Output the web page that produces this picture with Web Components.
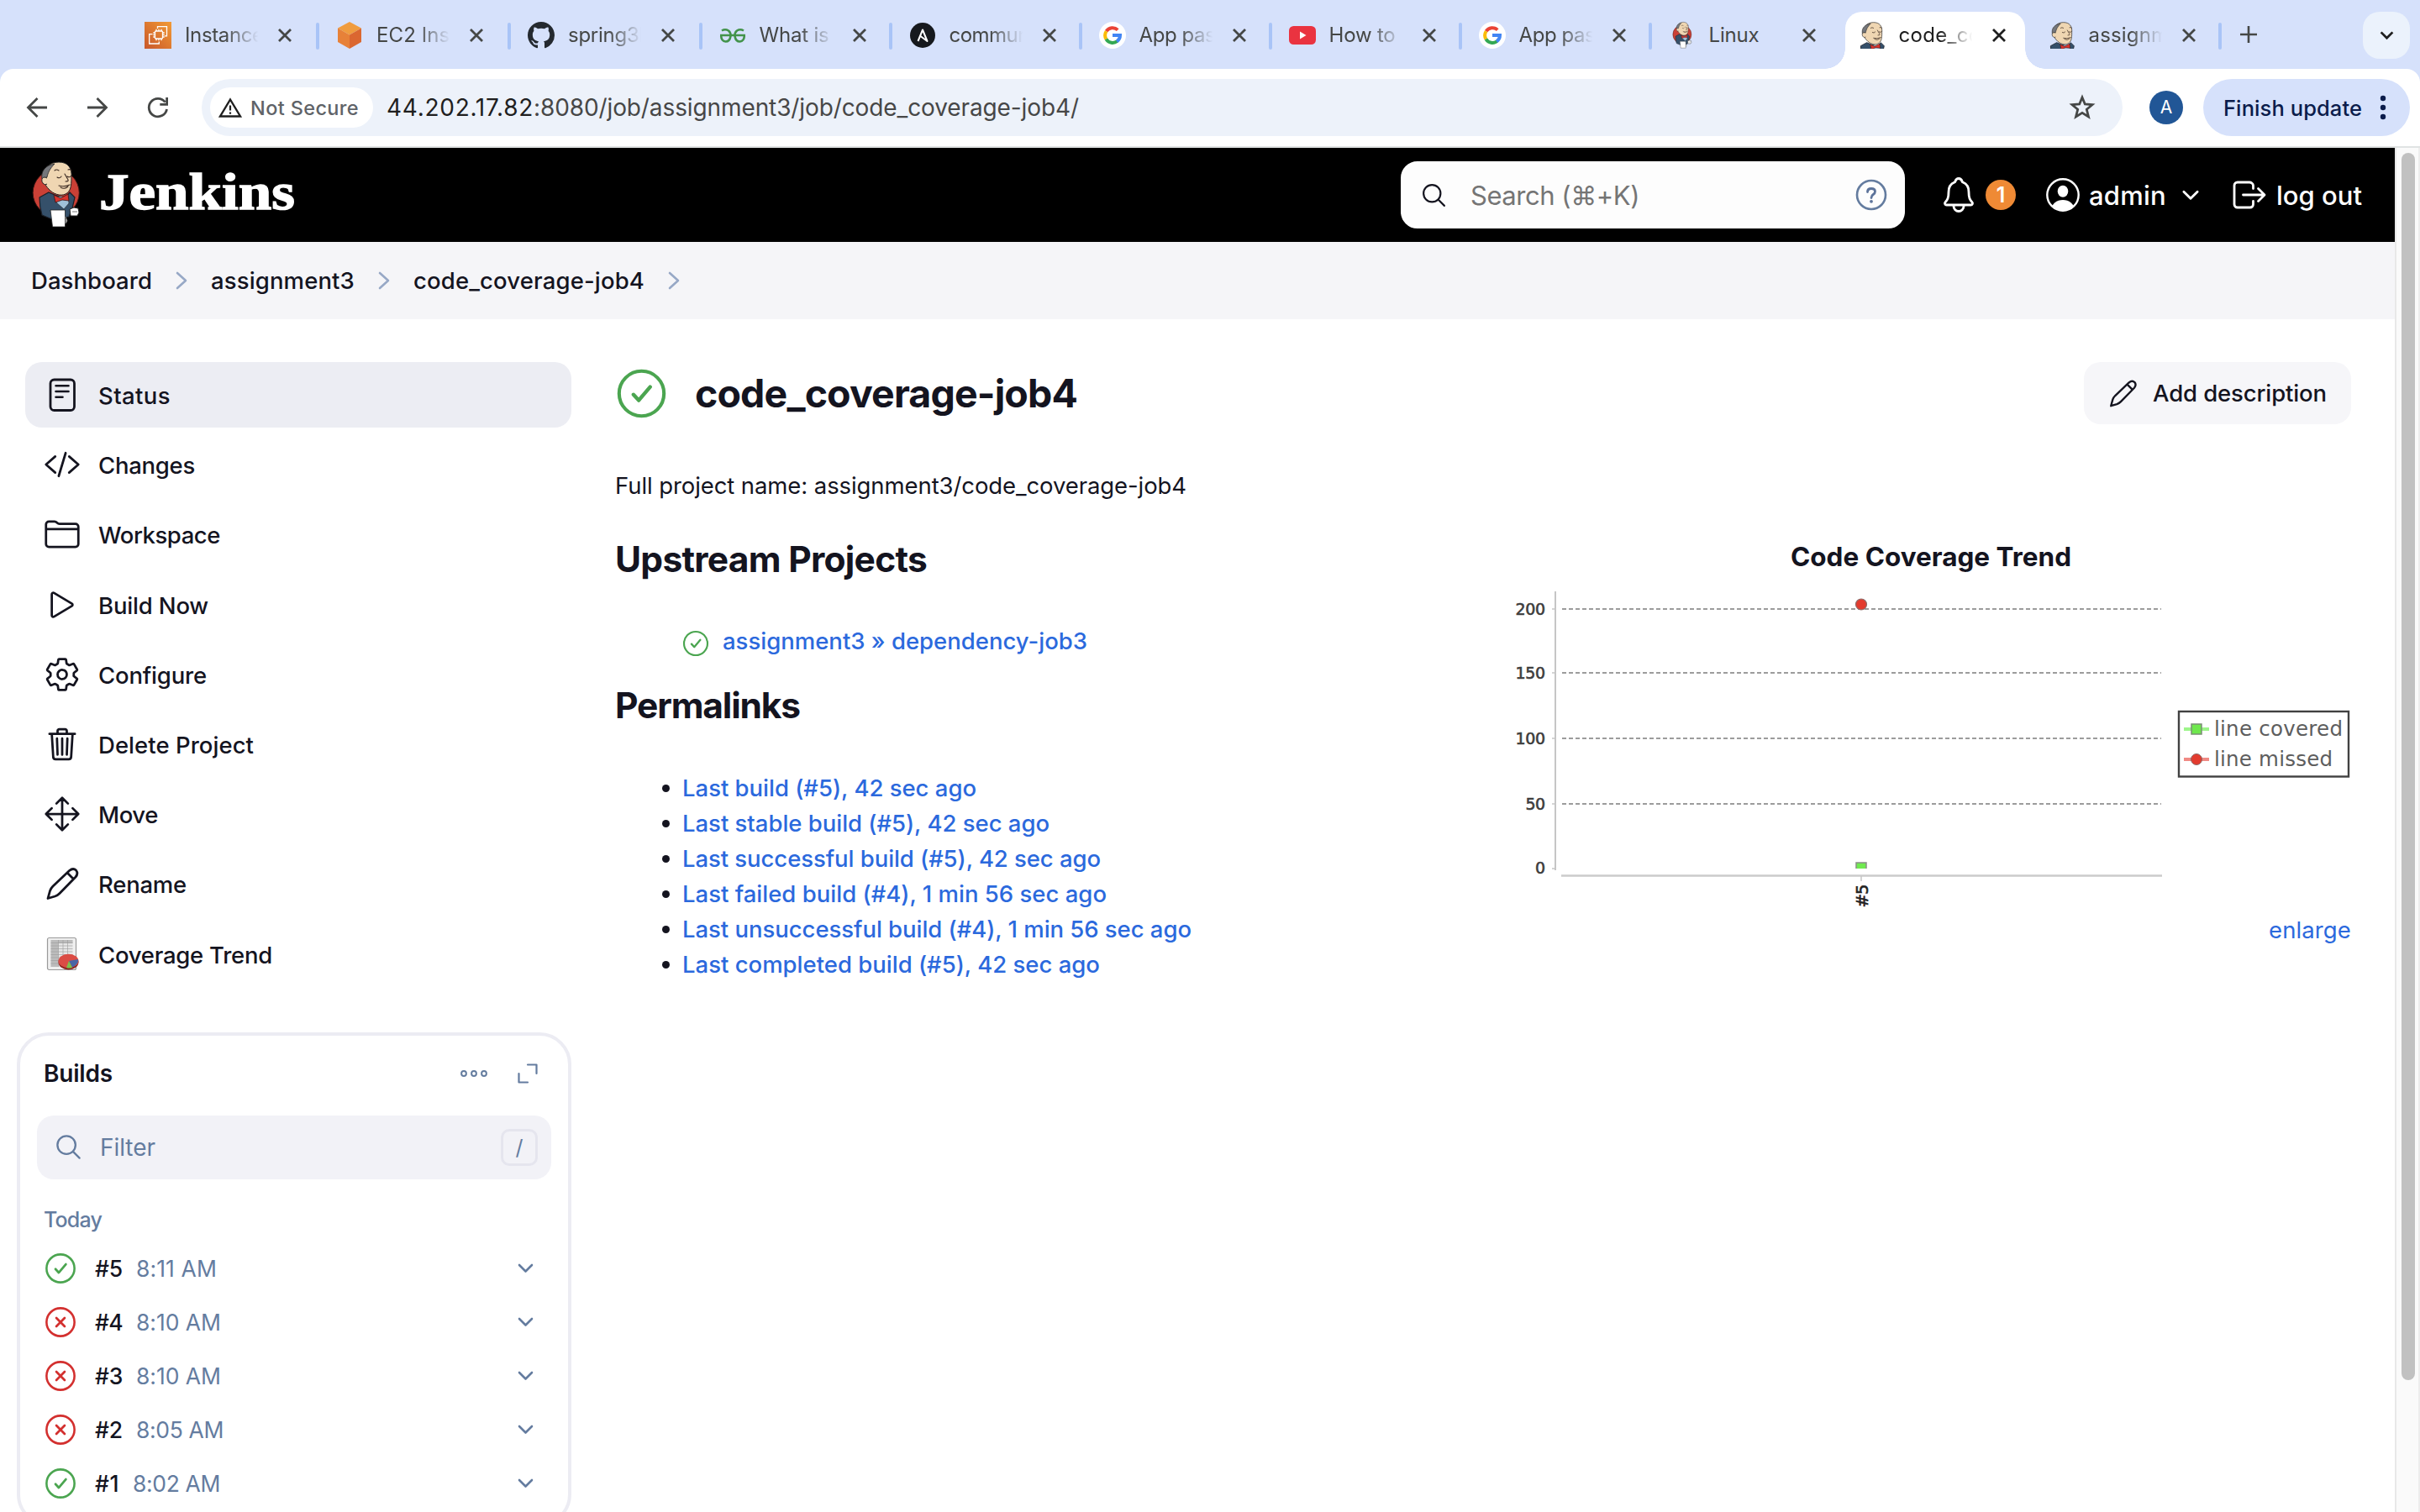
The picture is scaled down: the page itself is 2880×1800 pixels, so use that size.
<!DOCTYPE html>
<html lang="en">
<head>
<meta charset="utf-8">
<title>code_coverage-job4 [Jenkins]</title>
<style>
html,body{margin:0;padding:0}
body{width:2880px;height:1800px;overflow:hidden;background:#fff;font-family:Inter,"Liberation Sans",sans-serif;color:#14141f}
</style>
</head>
<body>
<app-window></app-window>
<script>
const S='fill="none" stroke="currentColor" stroke-linecap="round" stroke-linejoin="round"';
const HEAD=`<path d="M13 18C13 8 20 1 31 1C42 1 47 8 46 19C46 30 45 36 39 39C33 42 24 39 19 33C15 29 13 25 13 18Z" fill="#efd6b2" stroke="#222" stroke-width="1"/>
<path d="M19 5C12 9 10 14 11 21L17 19C18 14 20 9 26 3Z" fill="#75777b" stroke="#222" stroke-width=".8"/>
<path d="M17 20C12 17 9 22 12 26C13 28 16 28 17 27" fill="#efd6b2" stroke="#222" stroke-width="1"/>
<path d="M26 11Q28 9 31 11M42 10Q44 9 46 11M29 19Q32 21 34 18M41 18Q44 20 46 17M38 15L42 22Q43 24 39 24M31 29Q37 31 44 28M33 31Q38 34 42 30" fill="none" stroke="#3b2a22" stroke-width="1.1" stroke-linecap="round"/>`;
const BODY=`<path d="M8 43L19 37L26 40L38 44L44 37L50 43L47 56L43 66L23 69L11 64Q8 54 8 43Z" fill="#35506a" stroke="#1b2029" stroke-width="1.2"/>
<path d="M27 42L42 42L43 50L37 57L28 49Z" fill="#9fc0d8" stroke="#222" stroke-width=".6"/>
<path d="M25 40L33 44L42 39L43 47L35 46L27 49Z" fill="#d8352f" stroke="#391414" stroke-width=".8"/>`;
const G=`<circle cx="16" cy="16" r="16" fill="#fff"/><path d="M22.2 9.6A9 9 0 0 0 8.6 11.2" fill="none" stroke="#ea4335" stroke-width="4"/><path d="M8.6 11.2A9 9 0 0 0 8.4 20.5" fill="none" stroke="#fbbc05" stroke-width="4"/><path d="M8.4 20.5A9 9 0 0 0 21.6 23" fill="none" stroke="#34a853" stroke-width="4"/><path d="M21.2 23.3A9 9 0 0 0 25 16H16" fill="none" stroke="#4285f4" stroke-width="4"/>`;
const ICONS={
 ec2:['0 0 32 32',`<defs><linearGradient id="a" x1="0" y1="1" x2="1" y2="0"><stop offset="0" stop-color="#c8572a"/><stop offset="1" stop-color="#f29a35"/></linearGradient></defs><path fill="url(#a)" d="M0 0h32v32H0z"/><g fill="none" stroke="#fff" stroke-width="1.3"><rect x="12.500" y="11" width="9" height="9" rx="1"/><path d="M14 8.800V11M17 8.800V11M20 8.800V11M14 20V22.200M17 20V22.200M20 20V22.200M10.300 13H12.500M10.300 15.500H12.500M10.300 18H12.500M21.500 13H23.700M21.500 15.500H23.700M21.500 18H23.700M15.500 8V5.700H26.500V16.800H24M9.500 14.700H5.700V26H17.300V23.500"/></g>`],
 cube:['0 0 32 32',`<path fill="#f09c3e" d="M16 0L30 7.500L16 15.500L2 7.500Z"/><path fill="#e78138" d="M2 7.500L16 15.500V32L2 24Z"/><path fill="#db6730" d="M30 7.500L16 15.500V32L30 24Z"/>`],
 github:['0 0 16 16',`<path fill="#24292f" d="M8 0C3.580 0 0 3.580 0 8c0 3.540 2.290 6.530 5.470 7.590.4.070.55-.17.55-.38 0-.19-.01-.82-.01-1.490-2.010.37-2.530-.49-2.690-.94-.09-.23-.48-.94-.82-1.130-.28-.15-.68-.52-.01-.53.63-.01 1.080.58 1.230.82.72 1.210 1.870.87 2.330.66.07-.52.28-.87.51-1.070-1.780-.2-3.640-.89-3.640-3.950 0-.87.31-1.590.82-2.150-.08-.2-.36-1.020.08-2.120 0 0 .67-.21 2.200.82.64-.18 1.320-.27 2-.27s1.360.09 2 .27c1.530-1.040 2.200-.82 2.200-.82.44 1.100.16 1.920.08 2.120.51.56.82 1.270.82 2.150 0 3.070-1.870 3.750-3.650 3.950.29.25.54.73.54 1.480 0 1.070-.01 1.930-.01 2.200 0 .21.15.46.55.38A8 8 0 0 0 16 8c0-4.420-3.580-8-8-8z"/>`],
 gfg:['0 0 32 32',`<g fill="none" stroke="#43934b" stroke-width="2.600"><path d="M1 16H31M3 10.500Q7 8 11 10.500Q14 13 13.500 17Q12.500 23.500 7.500 23.500Q2.500 23 2.200 17M29 10.500Q25 8 21 10.500Q18 13 18.500 17Q19.500 23.500 24.500 23.500Q29.500 23 29.800 17"/></g>`],
 ansible:['0 0 32 32',`<circle cx="16" cy="16" r="15" fill="#16191d"/><path d="M10.500 23L16 9.500L21.500 23L12.800 16.500" fill="none" stroke="#fff" stroke-width="2" stroke-linejoin="round"/>`],
 google:['0 0 32 32',G],
 youtube:['0 0 32 32',`<rect y="5" width="32" height="22" rx="5.500" fill="#ea3340"/><path d="M13 11.500L20.500 16L13 20.500Z" fill="#fff"/>`],
 jenkins:['-1 0 58 80',`<circle cx="27.700" cy="37.500" r="27.600" fill="#cb4036" stroke="#3a1512"/>${BODY}${HEAD}<path d="M21 58L38.500 58L38.500 78L23.500 78Z" fill="#fff" stroke="#222" stroke-width=".8"/><path d="M44 57L49 55L54 56L55 61L53 65L45 65Z" fill="#fff" stroke="#222" stroke-width="1"/><path d="M47 60h6M39 66L41 71L39 74Z" stroke="#777" fill="#ddd"/>`],
 butler:['7 0 43 48',BODY+HEAD],
 x:['0 0 16 16',`<path fill="none" stroke="currentColor" stroke-width="2.800" d="M1 1L15 15M15 1L1 15"/>`],
 plus:['0 0 20 20',`<path d="M10 0V20M0 10H20" stroke="currentColor" stroke-width="2.600"/>`],
 down:['0 0 18 12',`<path ${S} stroke-width="2.600" d="M1.500 2L9 9.500L16.500 2"/>`],
 tabdown:['0 0 18 12',`<path fill="none" stroke="currentColor" stroke-width="3" d="M1.500 1.500L9 9L16.500 1.500"/>`],
 back:['0 0 26 26',`<path fill="none" stroke="currentColor" stroke-width="2.800" d="M25 13H3M13.500 2L2.500 13L13.500 24"/>`],
 fwd:['0 0 26 26',`<path fill="none" stroke="currentColor" stroke-width="2.800" d="M1 13H23M12.500 2L23.500 13L12.500 24"/>`],
 reload:['0 0 26 26',`<path fill="none" stroke="currentColor" stroke-width="2.800" d="M23.500 15A10.700 10.700 0 1 1 21.500 6.700M23.600 1V9.300H15.300"/>`],
 warn:['0 0 28 24',`<path fill="none" stroke="#1f1f1f" stroke-width="2.400" d="M14 2.500L26 22.500H2Z"/><path stroke="#1f1f1f" stroke-width="2.200" d="M14 9.500V15.500M14 17.500V19.800"/>`],
 star:['0 0 32 32',`<path fill="none" stroke="currentColor" stroke-width="2.800" d="M16 4L19.300 12L28 12.700L21.300 18.300L23.500 27L16 22.300L8.500 27L10.700 18.300L4 12.700L12.700 12Z"/>`],
 kebab:['0 0 8 30',`<g fill="currentColor"><circle cx="4" cy="4" r="3.200"/><circle cx="4" cy="15" r="3.200"/><circle cx="4" cy="26" r="3.200"/></g>`],
 search:['0 0 512 512',`<path ${S} stroke-width="34" d="M221.090 64a157.090 157.090 0 10157.090 157.090A157.100 157.100 0 00221.090 64zM338.290 338.290L448 448"/>`],
 help:['0 0 40 40',`<circle cx="20" cy="20" r="17" fill="none" stroke="#647c9f" stroke-width="2.600"/><path d="M15.500 16.500Q15.500 12.500 20 12.500Q24.500 12.500 24.500 16Q24.500 18 22.300 19.500Q20 21 20 23.500" ${S} stroke-width="2.800"/><circle cx="20" cy="27.800" r="1.900" fill="currentColor"/>`],
 bell:['0 0 512 512',`<path ${S} stroke-width="30" d="M427.680 351.430C402 320 383.870 304 383.870 217.350 383.870 138 343.350 109.730 310 96c-4.430-1.820-8.600-6-9.950-10.550C294.200 65.540 277.800 48 256 48s-38.210 17.550-44 37.470c-1.350 4.600-5.520 8.710-9.950 10.530-33.390 13.750-73.870 41.920-73.870 121.350C128.130 304 110 320 84.320 351.430 73.680 364.450 83 384 101.610 384h308.880c18.510 0 27.770-19.610 17.190-32.570zM320 384v16a64 64 0 01-128 0v-16"/>`],
 user:['0 0 40 40',`<defs><clipPath id="c"><circle cx="20" cy="20" r="18.500"/></clipPath></defs><circle cx="20" cy="20" r="18.700" fill="none" stroke="#fff" stroke-width="2.400"/><ellipse cx="20" cy="15.800" rx="6.300" ry="7" fill="#fff"/><ellipse cx="20" cy="37" rx="13.500" ry="11" fill="#fff" clip-path="url(#c)"/>`],
 logout:['0 0 512 512',`<path ${S} stroke-width="30" d="M304 336v40a40 40 0 01-40 40H104a40 40 0 01-40-40V136a40 40 0 0140-40h152c22.090 0 48 17.910 48 40v40M368 336l80-80-80-80M176 256h256"/>`],
 crumb:['0 0 14 22',`<path ${S} stroke-width="2.600" d="M2 2L12 11L2 20"/>`],
 status:['0 0 44 44',`<rect x="8" y="4" width="28.500" height="36.500" rx="4.500" ${S} stroke-width="2.800"/><path ${S} stroke-width="2.600" d="M14.500 11.300H29.500M14.500 18H29.500M14.500 24.700H22.500"/>`],
 code:['0 0 512 512',`<path ${S} stroke-width="32" d="M160 368L32 256l128-112M352 368l128-112-128-112M304 96l-96 320"/>`],
 folder:['0 0 512 512',`<path ${S} stroke-width="32" d="M440 432H72a40 40 0 01-40-40V120a40 40 0 0140-40h75.890a40 40 0 0122.190 6.720l27.840 18.560a40 40 0 0022.190 6.720H440a40 40 0 0140 40v240a40 40 0 01-40 40zM32 184h448"/>`],
 play:['0 0 512 512',`<path ${S} stroke-width="32" d="M112 111v290c0 17.440 17 28.520 31 20.160l247.900-148.370c12.120-7.250 12.120-26.330 0-33.580L143 90.840c-14-8.360-31 2.720-31 20.160z"/>`],
 gear:['0 0 512 512',`<path ${S} stroke-width="32" d="M262.290 192.310a64 64 0 1057.400 57.400 64.130 64.130 0 00-57.400-57.400zM416.390 256a154.340 154.340 0 01-1.530 20.790l45.210 35.460a10.810 10.810 0 012.450 13.750l-42.770 74a10.810 10.810 0 01-13.140 4.590l-44.900-18.080a16.110 16.110 0 00-15.170 1.750A164.480 164.480 0 01325 400.800a15.940 15.940 0 00-8.820 12.140l-6.730 47.890a11.080 11.080 0 01-10.680 9.170h-85.540a11.110 11.110 0 01-10.690-8.870l-6.720-47.820a16.070 16.070 0 00-9-12.220 155.300 155.300 0 01-21.460-12.570 16 16 0 00-15.110-1.710l-44.890 18.070a10.810 10.810 0 01-13.140-4.580l-42.770-74a10.800 10.800 0 012.450-13.750l38.210-30a16.050 16.050 0 006-14.080c-.36-4.170-.58-8.330-.58-12.500s.21-8.270.58-12.350a16 16 0 00-6.070-13.940l-38.190-30A10.810 10.810 0 0149.480 186l42.770-74a10.810 10.810 0 0113.140-4.590l44.900 18.080a16.110 16.110 0 0015.170-1.750A164.480 164.480 0 01187 111.200a15.940 15.940 0 008.820-12.140l6.730-47.890A11.080 11.080 0 01213.230 42h85.540a11.110 11.110 0 0110.690 8.870l6.720 47.820a16.070 16.070 0 009 12.220 155.300 155.300 0 0121.460 12.570 16 16 0 0015.110 1.710l44.890-18.070a10.810 10.810 0 0113.140 4.580l42.770 74a10.800 10.800 0 01-2.450 13.750l-38.210 30a16.050 16.050 0 00-6.050 14.080c.33 4.140.55 8.300.55 12.470z"/>`],
 trash:['0 0 512 512',`<path ${S} stroke-width="32" d="M112 112l20 320c.95 18.490 14.400 32 32 32h184c17.670 0 30.870-13.510 32-32l20-320M80 112h352M192 112V72h0a23.930 23.930 0 0124-24h80a23.930 23.930 0 0124 24h0v40M256 176v224M184 176l8 224M328 176l-8 224"/>`],
 move:['0 0 512 512',`<path ${S} stroke-width="32" d="M176 112l80-80 80 80M255.980 32l.02 448M176 400l80 80 80-80M400 176l80 80-80 80M112 176l-80 80 80 80M32 256h448"/>`],
 pencil:['0 0 44 44',`<path ${S} stroke-width="2.800" d="M5 39.500L7.500 30.500Q8.500 27.500 11 25L30.500 6.500Q35 2.800 38.500 6Q41.500 9.800 38 14L19 33.500Q16.500 36 13.500 37ZM28 9L35.500 16.500"/>`],
 trend:['0 0 44 44',`<rect x="4.500" y="2.500" width="34" height="38" rx="2" fill="#f0f0f0" stroke="#9a9a9a" stroke-width="1.200"/><rect x="8.500" y="5" width="26" height="32" fill="#e6e6e6"/><path fill="#bcbcbc" d="M8.500 5h26v4h-26zM8.500 5h9v32h-9z"/><path d="M8.500 8.500h26M8.500 12h26M8.500 15.500h26M8.500 19h26M8.500 22.500h26M8.500 26h26M8.500 29.500h26M8.500 33h26M17.500 5v32M23 5v32M28.500 5v32" stroke="#9a9a9a" stroke-width=".6"/><ellipse cx="29.500" cy="31.500" rx="12" ry="9" fill="#8e2621"/><ellipse cx="29.500" cy="30" rx="12" ry="8.300" fill="#db4c45"/><path d="M30 30L41 28Q42 34 34 37.500Z" fill="#4866a5"/><path d="M30 30L34 38Q30 39 27 38Z" fill="#7cc24c"/>`],
 dots:['0 0 32 8',`<g fill="none" stroke="currentColor" stroke-width="2"><circle cx="4" cy="4" r="2.900"/><circle cx="16" cy="4" r="2.900"/><circle cx="28" cy="4" r="2.900"/></g>`],
 expand:['0 0 24 24',`<path ${S} stroke-width="2.200" d="M12 1.500H22.500V12M1.500 12V22.500H12"/>`],
 ok:['0 0 40 40',`<circle cx="20" cy="20" r="17.500" fill="none" stroke="#4ba550" stroke-width="2.700"/><path d="M13.700 20.800L17.800 25.300L26.700 14.800" fill="none" stroke="#4ba550" stroke-width="2.900" stroke-linecap="round" stroke-linejoin="round"/>`],
 fail:['0 0 40 40',`<circle cx="20" cy="20" r="17.500" fill="none" stroke="#d3302f" stroke-width="2.700"/><path d="M14.800 14.800L25.200 25.200M25.200 14.800L14.800 25.200" fill="none" stroke="#d3302f" stroke-width="2.900" stroke-linecap="round"/>`]
};
class Base extends HTMLElement{
 connectedCallback(){ if(!this.shadowRoot){this.attachShadow({mode:'open'}).innerHTML=this.view();} }
 a(n,d=''){return this.getAttribute(n)??d}
}
const def=(n,view)=>customElements.define(n,class extends Base{view(){return view(this)}});

def('ui-icon',e=>{const [vb,p]=ICONS[e.a('name')];const w=e.a('w'),h=e.a('h',w);
 return `<style>:host{display:block;flex:none;width:${w}px;height:${h}px}svg{display:block;overflow:${e.a('name')==='butler'?'hidden':'visible'}}</style><svg width="${w}" height="${h}" viewBox="${vb}">${p}</svg>`});

def('browser-tab',e=>`<style>
:host{display:block;flex:none;width:${e.a('w')}px;height:82px;color:#454746;position:relative}
.row{display:flex;align-items:center;height:56px;padding:14px 0 0 ${e.a('w')==='228'?22:21.5}px;position:relative}
.t{margin-left:16px;width:93px;height:40px;line-height:40px;font-size:24px;white-space:nowrap;overflow:hidden;-webkit-mask:linear-gradient(90deg,#000 52%,transparent 94%)}
.t.full{-webkit-mask:none}
ui-icon.x{margin-left:18px}
.sep{position:absolute;right:-2px;top:27px;width:4px;height:32px;border-radius:2px;background:#a9c4f7}
.bg{position:absolute;left:6px;top:14px;width:214px;height:68px;border-radius:20px 20px 0 0;background:#fff}
.bg:before,.bg:after{content:"";position:absolute;bottom:0;width:24px;height:24px}
.bg:before{left:-24px;background:radial-gradient(circle at 0 0,transparent 23.500px,#fff 24px)}
.bg:after{right:-24px;background:radial-gradient(circle at 100% 0,transparent 23.500px,#fff 24px)}
:host([active]){color:#1f1f1f}
</style>${e.hasAttribute('active')?'<div class="bg"></div>':''}<div class="row"><ui-icon name="${e.a('icon')}" w="32"></ui-icon><div class="t ${e.hasAttribute('full')?'full':''}"><slot></slot></div><ui-icon class="x" name="x" w="16"></ui-icon></div>${e.hasAttribute('sep')?'<div class="sep"></div>':''}`);

def('tab-strip',()=>`<style>
:host{display:flex;height:82px;background:#d6e1fb;padding-left:150px;box-sizing:border-box}
.plus{margin:31px 0 0 24px;color:#454746}
.btn{margin:14px 12px 0 auto;width:56px;height:56px;border-radius:20px;background:#ebf2fc;display:flex;align-items:center;justify-content:center;color:#1f1f1f}
</style>
<browser-tab w="228" icon="ec2" sep><fit-text w="106">Instances</fit-text></browser-tab>
<browser-tab w="228" icon="cube" sep><fit-text w="151">EC2 Instance</fit-text></browser-tab>
<browser-tab w="228" icon="github" sep><fit-text w="104">spring3hi</fit-text></browser-tab>
<browser-tab w="226" icon="gfg" sep><fit-text w="83">What is</fit-text></browser-tab>
<browser-tab w="226" icon="ansible" sep><fit-text w="108">communit</fit-text></browser-tab>
<browser-tab w="226" icon="google" sep><fit-text w="103">App pass</fit-text></browser-tab>
<browser-tab w="226" icon="youtube" sep><fit-text w="79">How to</fit-text></browser-tab>
<browser-tab w="226" icon="google" sep><fit-text w="103">App pass</fit-text></browser-tab>
<browser-tab w="226" icon="jenkins" full><fit-text w="60">Linux</fit-text></browser-tab>
<browser-tab w="226" icon="butler" active><fit-text w="98">code_co</fit-text></browser-tab>
<browser-tab w="226" icon="butler" sep><fit-text w="110">assignme</fit-text></browser-tab>
<ui-icon class="plus" name="plus" w="20"></ui-icon>
<div class="btn"><ui-icon name="tabdown" w="17" h="11"></ui-icon></div>`);

def('browser-toolbar',()=>`<style>
:host{display:block;height:94px;background:#d6e1fb}
.bar{display:flex;align-items:center;height:92px;background:#fff;border-radius:16px 16px 0 0;border-bottom:2px solid #e0e3e3;padding:0 12px 0 31px;color:#454746}
.url{display:flex;align-items:center;flex:none;width:2286px;height:68px;border-radius:34px;background:#edf2fa;margin-left:39px;box-sizing:border-box;padding:0 32px 0 10px}
.chip{display:flex;align-items:center;width:194px;height:48px;border-radius:24px;background:#fff;padding-left:10px;box-sizing:border-box;gap:10px;font-size:23.500px;font-weight:500;color:#5f6368}
.addr{display:flex;margin-left:16px;font-size:28px;color:#474747}.addr b{font-weight:400;color:#1f1f1f}
.star{margin-left:auto}
.av{width:40px;height:40px;border-radius:50%;background:#215696;color:#fff;font-size:21px;line-height:40px;text-align:center;margin-left:32px}
.fin{display:flex;align-items:center;justify-content:space-between;width:246px;height:68px;box-sizing:border-box;padding:0 28px 0 24px;border-radius:34px;background:#d6e1fb;color:#0b1c4b;font-size:25.500px;font-weight:500;margin-left:24px}
</style><div class="bar"><ui-icon name="back" w="26"></ui-icon><ui-icon name="fwd" w="26" style="margin-left:46px"></ui-icon><ui-icon name="reload" w="26" style="margin-left:46px"></ui-icon>
<div class="url"><div class="chip"><ui-icon name="warn" w="28" h="24"></ui-icon><fit-text w="129">Not Secure</fit-text></div><div class="addr"><b><fit-text w="175">44.202.17.82</fit-text></b><fit-text w="649">:8080/job/assignment3/job/code_coverage-job4/</fit-text></div><ui-icon class="star" name="star" w="32"></ui-icon></div>
<div class="av">A</div><div class="fin"><fit-text w="165">Finish update</fit-text><ui-icon name="kebab" w="8" h="30"></ui-icon></div></div>`);

def('jenkins-header',()=>`<style>
:host{display:flex;align-items:center;height:112px;background:#000;color:#fff;padding-left:38px;box-sizing:border-box;font-size:31px;font-weight:500}
.word{display:block;width:238px;height:80px;margin-left:22px}
.box{display:flex;align-items:center;width:600px;height:80px;box-sizing:border-box;border-radius:20px;background:#fdfdfd;border:3px solid #fff;margin-left:1311px;padding:0 17px 0 20px;color:#14141f}
.ph{color:#757575;font-weight:400;margin-left:27px;font-size:31px}
.help{margin-left:auto;color:#5c739a}
.badge{width:36px;height:36px;border-radius:50%;background:#ef8a35;font-size:25px;font-weight:600;text-align:center;line-height:36px;margin-left:8px}
</style><ui-icon name="jenkins" w="58" h="80"></ui-icon>
<svg class="word" viewBox="0 0 238 80"><text x="0" y="57" textLength="233" lengthAdjust="spacingAndGlyphs" font-family="Liberation Serif,serif" font-weight="700" font-size="61" fill="#fff" stroke="#fff" stroke-width="1.400">Jenkins</text></svg>
<div class="box"><ui-icon name="search" w="33"></ui-icon><div class="ph"><fit-text w="201">Search (⌘+K)</fit-text></div><ui-icon class="help" name="help" w="40"></ui-icon></div>
<ui-icon name="bell" w="48" style="margin-left:40px"></ui-icon><div class="badge">1</div>
<ui-icon name="user" w="40" style="margin-left:36px"></ui-icon><fit-text w="92" style="margin-left:11px">admin</fit-text><ui-icon name="down" w="20" h="13" style="margin-left:19px"></ui-icon>
<ui-icon name="logout" w="48" style="margin-left:36px"></ui-icon><fit-text w="102" style="margin-left:8px">log out</fit-text>`);

def('bread-crumbs',()=>`<style>
:host{display:flex;align-items:center;height:92px;background:#f5f5f8;padding-left:37px;font-size:27.500px;font-weight:500}
ui-icon{color:#97a8c6;margin:0 28px 0 28px}
</style><fit-text w="144">Dashboard</fit-text><ui-icon name="crumb" w="14" h="22"></ui-icon><fit-text w="171">assignment3</fit-text><ui-icon name="crumb" w="14" h="22"></ui-icon><fit-text w="275">code_coverage-job4</fit-text><ui-icon name="crumb" w="14" h="22"></ui-icon>`);

def('nav-item',e=>`<style>
:host{display:flex;align-items:center;height:78px;border-radius:20px;padding-left:22px;gap:21px;font-size:27.500px;font-weight:500}
:host([active]){background:#ecedf3}
::slotted(*){padding-top:2px}
</style><ui-icon name="${e.a('icon')}" w="44"></ui-icon><slot></slot>`);

def('side-nav',()=>`<style>:host{display:flex;flex-direction:column;gap:5.200px;margin-left:30px;width:650px}</style>`+
 [['status','Status',86,1],['code','Changes',115],['folder','Workspace',145],['play','Build Now',131],['gear','Configure',129],['trash','Delete Project',185],['move','Move',71],['pencil','Rename',105],['trend','Coverage Trend',207]]
 .map(([i,t,w,a])=>`<nav-item icon="${i}"${a?' active':''}><fit-text w="${w}">${t}</fit-text></nav-item>`).join(''));

def('build-row',e=>`<style>
:host{display:flex;align-items:center;height:64px;font-size:26.500px;padding:0 21px 0 9px}
.n{font-weight:500;margin-left:22px}.t{color:#647c9f;margin-left:16px}
.n,.t{padding-top:1px}
ui-icon.d{margin-left:auto;color:#647c9f}
</style><ui-icon name="${e.a('st')}" w="38"></ui-icon><fit-text class="n" w="${e.a('nw')}">${e.a('n')}</fit-text><fit-text class="t" w="${e.a('tw')}">${e.a('t')}</fit-text><ui-icon class="d" name="down" w="19" h="12"></ui-icon>`);

def('builds-card',()=>`<style>
:host{display:block;box-sizing:border-box;width:660px;height:588px;margin:54px 0 0 20px;border:4px solid #ececf3;border-radius:38px;padding:19px 20px}
.h{display:flex;align-items:center;height:52px;padding:0 16px 0 8px;font-size:28px;font-weight:600;color:#14141f}
.h ui-icon{color:#647c9f}
.f{display:flex;align-items:center;height:76px;box-sizing:border-box;margin-top:24px;border-radius:20px;background:#f2f2f7;padding:0 16px 0 20px;color:#647c9f;font-size:28px}
.k{margin-left:auto;width:44px;height:44px;box-sizing:border-box;border:3px solid #e5e5ee;border-radius:10px;text-align:center;line-height:38px;font-size:25px}
.d{height:44px;line-height:44px;margin:26px 0 4px 8px;color:#647c9f;font-size:25px;font-weight:500}
</style><div class="h"><fit-text w="82">Builds</fit-text><ui-icon name="dots" w="32" h="8" style="margin-left:auto"></ui-icon><ui-icon name="expand" w="24" style="margin-left:36px"></ui-icon></div>
<div class="f"><ui-icon name="search" w="35"></ui-icon><fit-text w="66" style="margin-left:20px">Filter</fit-text><div class="k">/</div></div>
<div class="d"><fit-text w="69">Today</fit-text></div>`+
 [['ok','#5',33,'8:11 AM',96],['fail','#4',33,'8:10 AM',101],['fail','#3',33,'8:10 AM',101],['fail','#2',33,'8:05 AM',104],['ok','#1',29,'8:02 AM',104]]
 .map(r=>`<build-row st="${r[0]}" n="${r[1]}" nw="${r[2]}" t="${r[3]}" tw="${r[4]}"></build-row>`).join(''));

def('coverage-chart',()=>{
 const y={200:725,150:801,100:879,50:957,0:1034};
 const tx='font-family="DejaVu Sans,sans-serif"';
 return `<style>:host{display:block;width:1000px}
 .t{text-align:center;height:43px;line-height:43px;font-size:31.500px;font-weight:700}
 svg{display:block}.e{text-align:right;height:42px;line-height:42px;font-size:27.500px;color:#2b69dd;margin-top:2px}</style>
 <div class="t"><fit-text w="334">Code Coverage Trend</fit-text></div>
 <svg width="1000" height="400" viewBox="1798 684 1000 400">
 <path d="M1851 704V1036" stroke="#c6c6c6" stroke-width="2"/><path d="M1858 1042.500H2573" stroke="#cbcbcb" stroke-width="2.500"/><path d="M2215 1043V1049" stroke="#c6c6c6" stroke-width="1.500"/>`+
 Object.entries(y).map(([v,c])=>`<path d="M1847 ${c}h4" stroke="#c6c6c6" stroke-width="1.500"/><text x="1839" y="${c+(v==='0'?5.5:6.5)}" text-anchor="end" ${tx} font-size="19" fill="#3d3d3d" stroke="#3d3d3d" stroke-width=".6" textLength="${v.length*11.8}">${v}</text>`+(v!=='0'?`<path d="M1859 ${c}H2572" stroke="#9c9c9c" stroke-width="2.200" stroke-dasharray="5 3"/>`:'')).join('')+
 `<circle cx="2215" cy="719.500" r="6.500" fill="#e33b2e" stroke="#8d6a68" stroke-width="1.200"/>
 <path fill="#70ea50" d="M2209 1027h12v7h-12z"/><path d="M2209 1034V1027H2221V1034" fill="none" stroke="#8a8f88" stroke-width="1.500"/>
 <text transform="translate(2222.500 1080.500) rotate(-90)" ${tx} font-size="19.500" fill="#222" stroke="#222" stroke-width=".6" textLength="28">#5</text>
 <rect x="2593" y="847" width="202" height="77.500" fill="#fff" stroke="#414141" stroke-width="2.400"/>
 <path d="M2599 868H2629" stroke="#9df58a" stroke-width="4"/><rect x="2608" y="862" width="12" height="12" fill="#6ee84c" stroke="#7a8f74" stroke-width="1.500"/>
 <path d="M2599 904H2629" stroke="#f08a84" stroke-width="4"/><circle cx="2614" cy="904" r="6.500" fill="#e33b2e" stroke="#8d6a68"/>
 <text x="2635" y="875.500" ${tx} font-size="24.500" fill="#5e5e5e" textLength="153">line covered</text><text x="2635" y="911.500" ${tx} font-size="24.500" fill="#5e5e5e" textLength="141">line missed</text>
 </svg><div class="e"><fit-text w="98">enlarge</fit-text></div>`});

def('job-main',()=>`<style>
:host{display:block;flex:none;width:2066px;margin-left:52px;font-size:27.500px}
.top{display:flex;align-items:center;height:74px;padding-left:1px}
.h1{font-size:46.500px;font-weight:700;margin-left:33px}
.btn{display:flex;align-items:center;margin-left:auto;width:318px;height:74px;box-sizing:border-box;border-radius:20px;background:#f6f6f9;padding-left:28px;gap:17px;font-weight:500}
.full{height:42px;line-height:42px;margin-top:52px}
.cols{display:flex;justify-content:space-between;margin-top:42px}
.h2{font-size:42.500px;font-weight:700;height:50px;line-height:50px}
.a{color:#2b69dd;font-weight:450}
.up{display:flex;align-items:center;height:42px;margin:51px 0 31px 80px;gap:16px}
ul{margin:52px 0 0;padding:0 0 0 80px;list-style:none}
li{display:flex;align-items:center;height:42px}
li:before{content:"";width:9px;height:9px;border-radius:50%;background:#14141f;margin:0 15px 0 -24px}
</style>
<div class="top"><ui-icon name="ok" w="61"></ui-icon><div class="h1"><fit-text w="455">code_coverage-job4</fit-text></div><div class="btn"><ui-icon name="pencil" w="37"></ui-icon><fit-text w="207">Add description</fit-text></div></div>
<div class="full"><fit-text w="680">Full project name: assignment3/code_coverage-job4</fit-text></div>
<div class="cols"><div><div class="h2"><fit-text w="371">Upstream Projects</fit-text></div>
<div class="up"><ui-icon name="ok" w="32" style="margin-top:5px"></ui-icon><fit-text class="a" w="434">assignment3 » dependency-job3</fit-text></div>
<div class="h2"><fit-text w="220">Permalinks</fit-text></div><ul>`+
 [['Last build (#5), 42 sec ago',350],['Last stable build (#5), 42 sec ago',437],['Last successful build (#5), 42 sec ago',498],['Last failed build (#4), 1 min 56 sec ago',505],['Last unsuccessful build (#4), 1 min 56 sec ago',606],['Last completed build (#5), 42 sec ago',497]]
 .map(([t,w])=>`<li><fit-text class="a" w="${w}">${t}</fit-text></li>`).join('')+`</ul></div><coverage-chart></coverage-chart></div>`);

def('scroll-bar',()=>`<style>:host{display:block;flex:none;width:30px;box-sizing:border-box;background:#fafafa;border-left:2px solid #e8e8e8;border-right:2px solid #ededed;padding:6px 0 0 6px}
div{width:16px;height:1461px;border-radius:8px;background:#c1c1c1}</style><div></div>`);

def('app-window',()=>`<style>
:host{display:flex;flex-direction:column;width:2880px;height:1800px;overflow:hidden}
.view{display:flex;height:1624px}
.page{width:2850px;height:1624px;overflow:hidden}
.body{display:flex;padding-top:51px}
.side{width:680px;flex:none}
</style><tab-strip></tab-strip><browser-toolbar></browser-toolbar>
<div class="view"><div class="page"><jenkins-header></jenkins-header><bread-crumbs></bread-crumbs>
<div class="body"><div class="side"><side-nav></side-nav><builds-card></builds-card></div><job-main></job-main></div></div><scroll-bar></scroll-bar></div>`);

// Tracks its slotted text out or in so that the run takes the width given in "w".
customElements.define('fit-text',class extends HTMLElement{
 connectedCallback(){
  if(this.shadowRoot)return;
  this.attachShadow({mode:'open'}).innerHTML='<style>:host{display:inline-block;flex:none;white-space:nowrap}</style><slot></slot>';
  const w=this.getBoundingClientRect().width;
  this.style.letterSpacing=((+this.getAttribute('w')-w)/[...this.textContent].length).toFixed(3)+'px';
 }
});
</script>
</body>
</html>
